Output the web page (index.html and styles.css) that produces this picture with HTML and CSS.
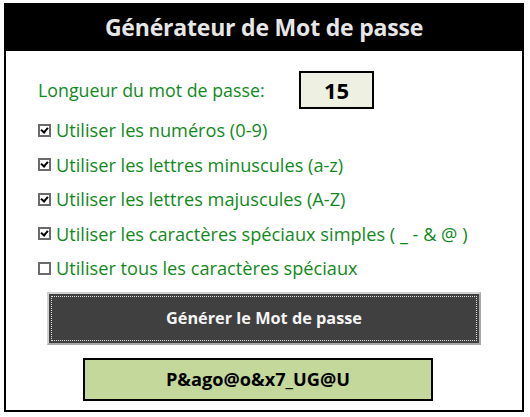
FILE: index.html
```html
<!DOCTYPE html>
<html lang="fr">
<head>
<meta charset="utf-8">
<link rel="stylesheet" href="styles.css">
</head>
<body>
<div class="panel">
  <div class="header">Générateur de Mot de passe</div>
  <div class="content">
    <div class="length-row">
      <span class="label">Longueur du mot de passe:</span>
      <span class="length-box">15</span>
    </div>
    <div class="options">
      <div class="option"><span class="cb checked"></span><span>Utiliser les numéros (0-9)</span></div>
      <div class="option"><span class="cb checked"></span><span>Utiliser les lettres minuscules (a-z)</span></div>
      <div class="option"><span class="cb checked"></span><span>Utiliser les lettres majuscules (A-Z)</span></div>
      <div class="option"><span class="cb checked"></span><span>Utiliser les caractères spéciaux simples ( _ - &amp; @ )</span></div>
      <div class="option"><span class="cb"></span><span>Utiliser tous les caractères spéciaux</span></div>
    </div>
    <div class="button-row">
      <div class="gen-button"><span>Générer le Mot de passe</span></div>
    </div>
    <div class="result-row">
      <div class="result">P&amp;ago@o&amp;x7_UG@U</div>
    </div>
  </div>
</div>
</body>
</html>
```
FILE: styles.css
```css
html, body {
  margin: 0;
  padding: 0;
  background: #ffffff;
}
.panel {
  margin: 3px 0 0 4px;
  width: 520px;
  height: 409px;
  box-sizing: border-box;
  border: 2px solid #000;
  border-top: 0;
  font-family: "Open Sans", sans-serif;
  display: flex;
  flex-direction: column;
}
.header {
  background: #000;
  color: #e6e6e6;
  height: 48px;
  margin: 0 -2px;
  display: flex;
  align-items: center;
  justify-content: center;
  font-weight: 700;
  font-size: 23px;
  letter-spacing: -0.2px;
}
.content {
  padding: 20px 0 0 32px;
  color: #12891c;
}
.length-row {
  display: flex;
  align-items: center;
  height: 37px;
}
.label {
  font-size: 17.8px;
  width: 261px;
}
.length-box {
  width: 71px;
  height: 34px;
  border: 2px solid #000;
  background: #eef0e2;
  color: #000;
  font-weight: 700;
  font-size: 22px;
  display: flex;
  align-items: center;
  justify-content: center;
}
.options {
  display: flex;
  flex-direction: column;
  margin-top: 5px;
}
.option {
  height: 34.5px;
  display: flex;
  align-items: center;
  font-size: 18.2px;
}
.cb {
  width: 9px;
  height: 9px;
  border: 2px solid #6b6b6b;
  margin-right: 5px;
  position: relative;
  flex: none;
}
.cb.checked::after {
  content: "";
  position: absolute;
  left: 2px;
  top: 0px;
  width: 3px;
  height: 5px;
  border-right: 2px solid #000;
  border-bottom: 2px solid #000;
  transform: rotate(40deg);
}
.button-row {
  margin-top: 6px;
  margin-left: 9px;
}
.gen-button {
  width: 434px;
  height: 53px;
  box-sizing: border-box;
  background: #404040;
  border: 2px solid #a8a8a8;
  border-left-color: #d0d0d0;
  border-top-color: #d0d0d0;
  padding: 2px;
  display: flex;
}
.gen-button span {
  flex: 1;
  border: 1px dotted #dddddd;
  display: flex;
  align-items: center;
  justify-content: center;
  color: #f4f4f4;
  font-weight: 700;
  font-size: 16.3px;
}
.result-row {
  margin-top: 13px;
  margin-left: 45px;
}
.result {
  width: 350px;
  height: 43px;
  box-sizing: border-box;
  border: 2px solid #000;
  background: #c4d89b;
  color: #000;
  font-weight: 700;
  font-size: 18.2px;
  display: flex;
  align-items: center;
  justify-content: center;
}
```
